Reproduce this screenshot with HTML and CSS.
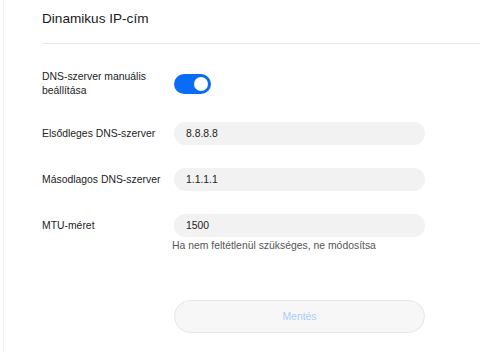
FILE: index.html
```html
<!DOCTYPE html>
<html lang="hu">
<head>
    <meta charset="UTF-8">
    <title>Dinamikus IP-cím</title>
    <link rel="stylesheet" href="styles.css">
</head>
<body>
    <div class="panel">
        <h2 class="title">Dinamikus IP-cím</h2>

        <div class="form">
            <div class="row toggle-row">
                <label class="label">DNS-szerver manuális beállítása</label>
                <div class="switch on"><span class="knob"></span></div>
            </div>

            <div class="row">
                <label class="label">Elsődleges DNS-szerver</label>
                <div class="field">8.8.8.8</div>
            </div>

            <div class="row">
                <label class="label">Másodlagos DNS-szerver</label>
                <div class="field">1.1.1.1</div>
            </div>

            <div class="row mtu-row">
                <label class="label">MTU-méret</label>
                <div>
                    <div class="field">1500</div>
                    <div class="hint">Ha nem feltétlenül szükséges, ne módosítsa</div>
                </div>
            </div>

            <div class="row">
                <span></span>
                <button class="btn-save" disabled>Mentés</button>
            </div>
        </div>
    </div>
</body>
</html>
```

FILE: styles.css
```css
body {
    margin: 0;
    font-family: "Liberation Sans", Arial, sans-serif;
    background: #fff;
    color: #222;
}
.panel {
    margin-left: 3px;
    border-left: 1px solid #f2f2f2;
    height: 352px;
    padding-left: 38px;
}
.title {
    margin: 0;
    padding-top: 11px;
    font-size: 13.6px;
    font-weight: normal;
    color: #1a1a1a;
    border-bottom: 1px solid #e8e8e8;
    box-sizing: border-box;
    height: 44px;
}
.form {
    padding-top: 26px;
}
.row {
    display: grid;
    grid-template-columns: 132px 251px;
    align-items: center;
    font-size: 10.4px;
}
.label {
    line-height: 14px;
    padding-right: 8px;
    color: #222;
}
.toggle-row {
    margin-bottom: 24px;
}
.switch {
    width: 37px;
    height: 20px;
    border-radius: 10px;
    background: #0a6cf5;
    position: relative;
}
.knob {
    position: absolute;
    right: 3px;
    top: 3px;
    width: 14px;
    height: 14px;
    border-radius: 50%;
    background: #fff;
}
.field {
    height: 23px;
    line-height: 23px;
    border-radius: 12px;
    background: #f2f2f2;
    padding-left: 12px;
    color: #222;
}
.row + .row {
    margin-bottom: 23px;
}
.mtu-row {
    align-items: start;
    margin-bottom: 49px !important;
}
.mtu-row .label {
    line-height: 23px;
}
.hint {
    margin-left: -2px;
    margin-top: 3px;
    color: #555;
}
.btn-save {
    height: 33px;
    border-radius: 17px;
    border: 1px solid #e6e6e6;
    background: #f7f7f7;
    color: #a9cdf7;
    font-family: inherit;
    font-size: 10.4px;
}
```
